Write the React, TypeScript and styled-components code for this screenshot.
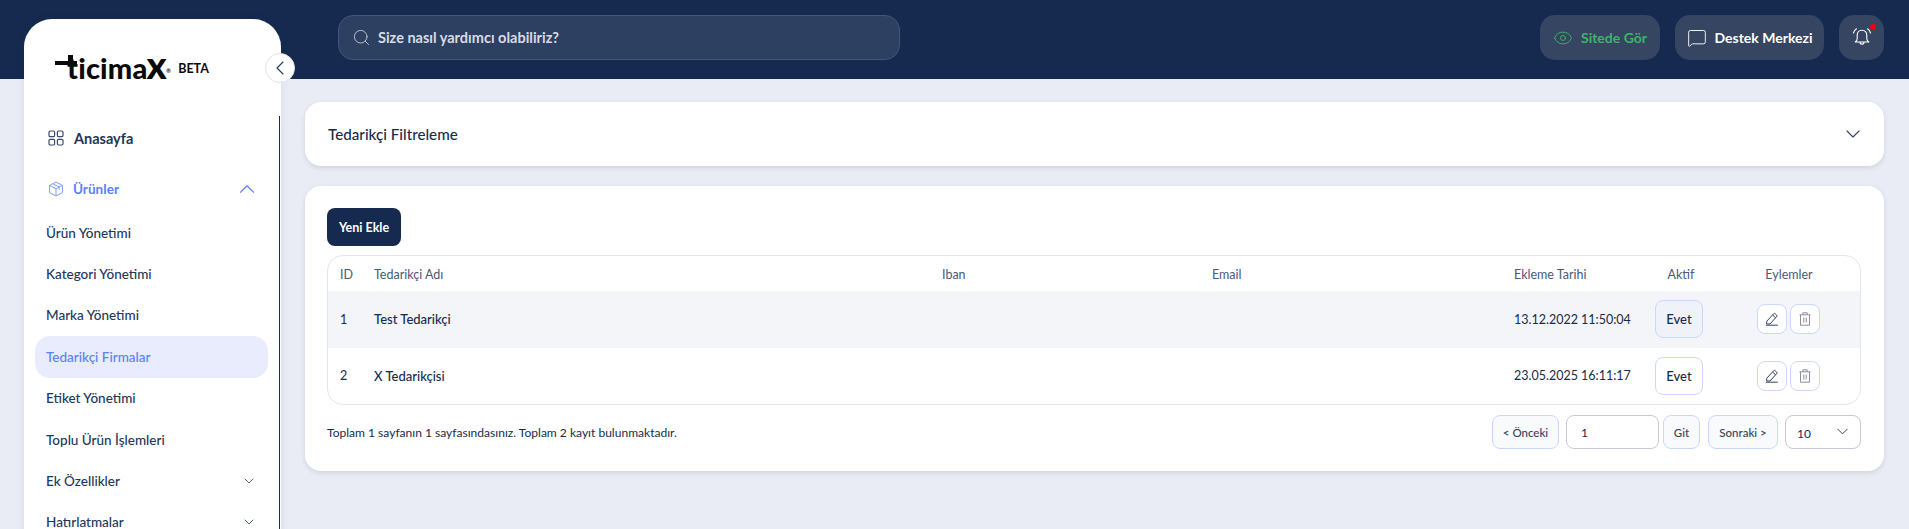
import * as React from 'react';
import styled, { createGlobalStyle } from 'styled-components';
import { ChevronDown, ChevronLeft, ChevronUp, Eye, MessageSquare, Search } from 'lucide-react';

const GlobalStyle = createGlobalStyle`
  html, body {
    margin: 0;
    padding: 0;
    background: #e9ecf5;
    font-family: Lato, "Liberation Sans", sans-serif;
    color: #172b4d;
  }
  * { box-sizing: border-box; }
`;

const Shell = styled.div`
  width: 1909px;
  height: 529px;
  overflow: hidden;
  background: #e9ecf5;
`;

const Header = styled.header`
  height: 79px;
  background: #162a4f;
  padding: 15px 25px 0 338px;
  display: flex;
  align-items: flex-start;
`;

const SearchBar = styled.div`
  width: 562px;
  height: 45px;
  border-radius: 15px;
  background: #2d4061;
  border: 1px solid #43557a;
  display: flex;
  align-items: center;
  gap: 7px;
  padding-left: 13px;
  color: #d7dce6;
  font-size: 14.5px;
  font-weight: 700;
  margin-right: auto;
`;

const TopButton = styled.div<{ $green?: boolean; $w: number }>`
  width: ${p => p.$w}px;
  height: 45px;
  border-radius: 15px;
  background: #354562;
  display: flex;
  align-items: center;
  justify-content: center;
  gap: 8px;
  font-size: 14px;
  font-weight: 700;
  white-space: nowrap;
  color: ${p => (p.$green ? '#3cb665' : '#ffffff')};
  margin-left: 15px;
`;

const BellButton = styled(TopButton)`
  position: relative;
`;

const RedDot = styled.span`
  position: absolute;
  top: 9px;
  right: 8px;
  width: 6px;
  height: 6px;
  border-radius: 50%;
  background: #f5000f;
`;

const Body = styled.div`
  display: flex;
  align-items: flex-start;
`;

const Sidebar = styled.aside`
  position: relative;
  width: 257px;
  height: 520px;
  margin: -60px 0 0 24px;
  background: #ffffff;
  border-radius: 28px 28px 0 0;
  box-shadow: 0 0 8px rgba(23, 43, 77, 0.08);
  flex-shrink: 0;
`;

const CollapseButton = styled.div`
  position: absolute;
  top: 34px;
  right: -14px;
  width: 30px;
  height: 30px;
  border-radius: 50%;
  background: #ffffff;
  border: 1px solid #dfe3ea;
  display: flex;
  align-items: center;
  justify-content: center;
  color: #22375a;
  z-index: 2;
`;

const LogoRow = styled.div`
  height: 78px;
  padding: 30px 0 0 31px;
  display: flex;
  align-items: flex-start;
`;

const LogoMark = styled.div`
  position: relative;
  display: flex;
  align-items: baseline;
  height: 30px;
  color: #0a0a0a;
  font-size: 29px;
  line-height: 30px;
  font-weight: 900;
  letter-spacing: 0.2px;
  padding-left: 12px;
`;

const LogoBar = styled.span`
  position: absolute;
  left: 0;
  top: 12px;
  width: 22px;
  height: 3.5px;
  background: #0a0a0a;
`;

const LogoStem = styled.span`
  position: absolute;
  left: 13px;
  top: 6px;
  width: 5px;
  height: 10px;
  background: #0a0a0a;
`;

const LogoX = styled.span`
  font-size: 38px;
  font-weight: 900;
  line-height: 30px;
  margin-left: -1px;
`;

const LogoReg = styled.span`
  font-size: 6px;
  line-height: 6px;
  font-weight: 700;
  margin-left: -1px;
  transform: translateY(-6px);
`;

const BetaTag = styled.span`
  margin: 13px 0 0 7px;
  font-size: 12.5px;
  line-height: 14px;
  font-weight: 700;
  color: #0a0a0a;
`;

const NavScroll = styled.nav`
  height: 420px;
  margin: 19px 1px 0 0;
  padding: 1.5px 11px 0;
  border-right: 1px solid #172b4d;
  overflow: hidden;
`;

const NavMain = styled.div<{ $active?: boolean }>`
  height: 41px;
  display: flex;
  align-items: center;
  gap: ${p => (p.$active ? '9px' : '10px')};
  padding: 0 8px 0 13px;
  font-size: ${p => (p.$active ? '13.6px' : '14.5px')};
  font-weight: 700;
  color: ${p => (p.$active ? '#5b80f8' : '#22375a')};
  margin-bottom: ${p => (p.$active ? '2.5px' : '10px')};
`;

const NavItem = styled.div<{ $active?: boolean }>`
  height: 41.4px;
  display: flex;
  align-items: center;
  justify-content: space-between;
  padding: 0 11px;
  font-size: 13.5px;
  font-weight: 500;
  white-space: nowrap;
  border-radius: 15px;
  color: ${p => (p.$active ? '#5b80f8' : '#22375a')};
  background: ${p => (p.$active ? '#e8ecfc' : 'transparent')};
`;

const ActiveChevron = styled(ChevronUp)`
  margin-left: auto;
`;

const Main = styled.main`
  flex: 1;
  padding: 23px 27px 0 24px;
  display: flex;
  flex-direction: column;
  gap: 20px;
`;

const Card = styled.section`
  background: #ffffff;
  border-radius: 16px;
  box-shadow: 0 2px 5px rgba(23, 43, 77, 0.12);
`;

const FilterCard = styled(Card)`
  height: 64px;
  padding: 0 19px 0 23px;
  display: flex;
  align-items: center;
  justify-content: space-between;
  font-size: 15.2px;
  font-weight: 500;
  svg { color: #33435f; }
`;

const ListCard = styled(Card)`
  height: 285px;
  padding: 22px 23px 0 22px;
`;

const AddButton = styled.button`
  display: block;
  width: 74px;
  height: 38px;
  border: 0;
  border-radius: 8px;
  background: #162a4f;
  color: #ffffff;
  font: 700 12.5px Lato, sans-serif;
`;

const Table = styled.div`
  margin-top: 9px;
  border: 1px solid #e3e6ec;
  border-radius: 16px;
  overflow: hidden;
`;

const Row = styled.div<{ $head?: boolean; $striped?: boolean }>`
  display: grid;
  grid-template-columns: 34px 568px 270px 302px 130px 74px 142px;
  align-items: center;
  padding: ${p => (p.$head ? '2px' : '0')} 0 0 12px;
  height: ${p => (p.$head ? '35px' : '56.5px')};
  background: ${p => (p.$striped ? '#f3f5f8' : 'transparent')};
  font-size: 12.5px;
  color: ${p => (p.$head ? '#4a5a75' : '#172b4d')};
`;

const NameCell = styled.span`
  font-size: 13px;
  font-weight: 500;
`;

const CenterCell = styled.div`
  display: flex;
  justify-content: center;
  align-items: center;
  gap: 3px;
`;

const ActionsCell = styled(CenterCell)`
  padding-right: 2px;
`;

const StatusBadge = styled.div<{ $tinted?: boolean }>`
  width: 48px;
  height: 38px;
  border-radius: 8px;
  border: 1px solid #c9d8fb;
  background: ${p => (p.$tinted ? '#eff2f8' : '#ffffff')};
  display: flex;
  align-items: center;
  justify-content: center;
  font-size: 13px;
  font-weight: 500;
  margin-right: 4px;
`;

const IconButton = styled.div`
  width: 30px;
  height: 30px;
  border-radius: 8px;
  border: 1px solid #c9d8fb;
  background: #ffffff;
  display: flex;
  align-items: center;
  justify-content: center;
`;

const Footer = styled.div`
  margin-top: 10px;
  display: flex;
  align-items: center;
  font-size: 12.05px;
`;

const Summary = styled.span`
  margin-right: auto;
`;

const PageButton = styled.div<{ $w: number }>`
  width: ${p => p.$w}px;
  height: 34px;
  border-radius: 8px;
  border: 1px solid #c9d8fb;
  background: #f8fafc;
  display: flex;
  align-items: center;
  justify-content: center;
  font-size: 11.5px;
  font-weight: 500;
  color: #33435f;
`;

const PageInput = styled.div`
  width: 93px;
  height: 34px;
  margin: 0 4px 0 7px;
  border-radius: 8px;
  border: 1px solid #c5cad6;
  display: flex;
  align-items: center;
  padding-left: 14px;
  font-size: 12px;
`;

const PageSelect = styled.div`
  width: 76px;
  height: 34px;
  margin-left: 7px;
  border-radius: 8px;
  border: 1px solid #c5cad6;
  display: flex;
  align-items: center;
  justify-content: space-between;
  padding: 3px 8px 0 11px;
  font-size: 12px;
  svg { margin-top: -4px; }
`;

const NextButton = styled(PageButton)`
  margin-left: 8px;
`;

const GridIcon = () => (
  <svg width="16" height="16" viewBox="0 0 16 16" fill="none" stroke="#3a4c6c" strokeWidth="1.2">
    <rect x="1" y="1" width="5.6" height="5.6" rx="1.2" />
    <rect x="9.4" y="1" width="5.6" height="5.6" rx="1.2" />
    <rect x="1" y="9.4" width="5.6" height="5.6" rx="1.2" />
    <rect x="9.4" y="9.4" width="5.6" height="5.6" rx="1.2" />
  </svg>
);

const BoxIcon = () => (
  <svg width="16" height="16" viewBox="0 0 16 16" fill="none" stroke="#7f9dfb" strokeWidth="1" strokeLinejoin="round">
    <path d="M8 1 14.4 4.4V11.6L8 15 1.6 11.6V4.4Z" />
    <path d="M1.6 4.4 8 7.8 14.4 4.4M8 7.8V15M4.8 2.7 11.2 6.1V8.6" />
  </svg>
);

const BellIcon = () => (
  <svg width="20" height="21" viewBox="0 0 20 21" fill="none" stroke="#ffffff" strokeWidth="1.1" strokeLinecap="round" strokeLinejoin="round">
    <path d="M10 3.2c-3 0-4.8 2.2-4.8 5v3.6c0 1.4-.8 2.4-2 3.2h13.6c-1.2-.8-2-1.8-2-3.2V8.2c0-2.8-1.8-5-4.8-5Z" />
    <path d="M8 15.2c0 2.6 4 2.6 4 0" />
    <path d="M1.5 6C2 4 3 2.7 4.5 1.8M18.5 6C18 4 17 2.7 15.5 1.8" />
  </svg>
);

const EditIcon = () => (
  <svg width="14" height="14" viewBox="0 0 14 14" fill="none" stroke="#33435f" strokeWidth="1" strokeLinejoin="round">
    <path d="M1.8 9.2 8.6 1.8a1.2 1.2 0 0 1 1.7 0l1.3 1.2a1.2 1.2 0 0 1 0 1.7L5 12H1.6Z" />
    <path d="M7.6 3 10.7 5.9" />
    <path d="M.8 13.2h12" />
  </svg>
);

const TrashIcon = () => (
  <svg width="12" height="14" viewBox="0 0 12 14" fill="none" stroke="#8a8f99" strokeWidth="1">
    <path d="M1.5 3v10.2h9V3M.5 2.8h11M3.8 2.6V.8h4.4v1.8M4.8 5.5v5M7.2 5.5v5" />
  </svg>
);

const subItems = ['Ürün Yönetimi', 'Kategori Yönetimi', 'Marka Yönetimi', 'Tedarikçi Firmalar', 'Etiket Yönetimi', 'Toplu Ürün İşlemleri'];

const suppliers = [
  { id: 1, name: 'Test Tedarikçi', date: '13.12.2022 11:50:04' },
  { id: 2, name: 'X Tedarikçisi', date: '23.05.2025 16:11:17' },
];

export default function App(): JSX.Element {
  return (
    <Shell>
      <GlobalStyle />
      <Header>
        <SearchBar>
          <Search size={19} strokeWidth={1} color="#d7dce6" />
          Size nasıl yardımcı olabiliriz?
        </SearchBar>
        <TopButton $green $w={120}>
          <Eye size={20} strokeWidth={1.1} />
          Sitede Gör
        </TopButton>
        <TopButton $w={149}>
          <MessageSquare size={20} strokeWidth={1.1} />
          Destek Merkezi
        </TopButton>
        <BellButton $w={45}>
          <BellIcon />
          <RedDot />
        </BellButton>
      </Header>
      <Body>
        <Sidebar>
          <CollapseButton>
            <ChevronLeft size={24} strokeWidth={1.1} />
          </CollapseButton>
          <LogoRow>
            <LogoMark>
              <LogoBar />
              <LogoStem />
              ticima<LogoX>x</LogoX>
              <LogoReg>®</LogoReg>
            </LogoMark>
            <BetaTag>BETA</BetaTag>
          </LogoRow>
          <NavScroll>
            <NavMain>
              <GridIcon />
              Anasayfa
            </NavMain>
            <NavMain $active>
              <BoxIcon />
              Ürünler
              <ActiveChevron size={26} strokeWidth={1} />
            </NavMain>
            {subItems.map(item => (
              <NavItem key={item} $active={item === 'Tedarikçi Firmalar'}>
                {item}
              </NavItem>
            ))}
            <NavItem>
              Ek Özellikler
              <ChevronDown size={16} strokeWidth={1.2} />
            </NavItem>
            <NavItem>
              Hatırlatmalar
              <ChevronDown size={16} strokeWidth={1.2} />
            </NavItem>
          </NavScroll>
        </Sidebar>
        <Main>
          <FilterCard>
            Tedarikçi Filtreleme
            <ChevronDown size={24} strokeWidth={1.1} />
          </FilterCard>
          <ListCard>
            <AddButton>Yeni Ekle</AddButton>
            <Table>
              <Row $head>
                <span>ID</span>
                <span>Tedarikçi Adı</span>
                <span>Iban</span>
                <span>Email</span>
                <span>Ekleme Tarihi</span>
                <CenterCell>Aktif</CenterCell>
                <CenterCell>Eylemler</CenterCell>
              </Row>
              {suppliers.map((s, i) => (
                <Row key={s.id} $striped={i === 0}>
                  <span>{s.id}</span>
                  <NameCell>{s.name}</NameCell>
                  <span />
                  <span />
                  <span>{s.date}</span>
                  <CenterCell>
                    <StatusBadge $tinted={i === 0}>Evet</StatusBadge>
                  </CenterCell>
                  <ActionsCell>
                    <IconButton>
                      <EditIcon />
                    </IconButton>
                    <IconButton>
                      <TrashIcon />
                    </IconButton>
                  </ActionsCell>
                </Row>
              ))}
            </Table>
            <Footer>
              <Summary>Toplam 1 sayfanın 1 sayfasındasınız. Toplam 2 kayıt bulunmaktadır.</Summary>
              <PageButton $w={67}>&lt; Önceki</PageButton>
              <PageInput>1</PageInput>
              <PageButton $w={37}>Git</PageButton>
              <NextButton $w={70}>Sonraki &gt;</NextButton>
              <PageSelect>
                10
                <ChevronDown size={19} strokeWidth={1.1} />
              </PageSelect>
            </Footer>
          </ListCard>
        </Main>
      </Body>
    </Shell>
  );
}
